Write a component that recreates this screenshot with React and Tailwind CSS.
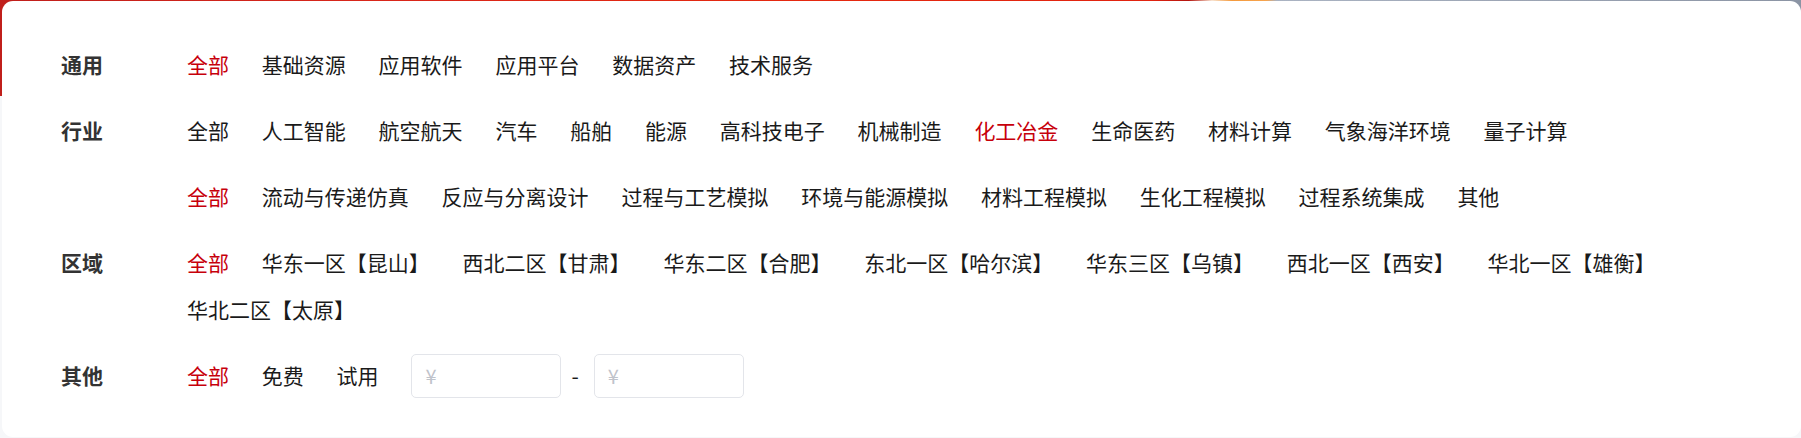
import React from "react";

const rows = [
  { label: "通用", items: ["全部", "基础资源", "应用软件", "应用平台", "数据资产", "技术服务"], active: 0 },
  {
    label: "行业",
    items: ["全部", "人工智能", "航空航天", "汽车", "船舶", "能源", "高科技电子", "机械制造", "化工冶金", "生命医药", "材料计算", "气象海洋环境", "量子计算"],
    active: 8,
  },
  {
    label: "",
    items: ["全部", "流动与传递仿真", "反应与分离设计", "过程与工艺模拟", "环境与能源模拟", "材料工程模拟", "生化工程模拟", "过程系统集成", "其他"],
    active: 0,
  },
  {
    label: "区域",
    items: ["全部", "华东一区【昆山】", "西北二区【甘肃】", "华东二区【合肥】", "东北一区【哈尔滨】", "华东三区【乌镇】", "西北一区【西安】", "华北一区【雄衡】", "华北二区【太原】"],
    active: 0,
  },
];

const font = { fontFamily: '"Noto Sans CJK SC", "Noto Sans", "Liberation Sans", sans-serif' };

function Row({ label, children, className = "" }) {
  return (
    <div className={"flex items-start " + className}>
      <div className="w-[126px] shrink-0 text-[21px] leading-[47px] font-bold text-[#333333]">{label}</div>
      <div className="flex flex-1 flex-wrap items-center gap-x-[32.8px] text-[21px] leading-[47px] text-[#1a1a1a]">
        {children}
      </div>
    </div>
  );
}

export default function App() {
  return (
    <div
      className="h-[438px] w-full bg-[#f6f7f9] bg-[linear-gradient(90deg,#c01f1b_0%,#d8261a_20%,#e5290f_45%,#e1230f_64%,#b3150f_66%,#f8e4d2_67.3%,#f49a3d_68.4%,#f6a44e_70.3%,#aab3c2_70.9%,#8b94a4_100%)] bg-no-repeat bg-[length:100%_96px] pt-[1px] pl-[2px] pb-[1px]"
      style={font}
    >
      <div className="h-full rounded-[11px] bg-white pt-[40px] pl-[59px] pr-[61px]">
        {rows.map((r, i) => (
          <Row key={i} label={r.label} className="mb-[19px]">
            {r.items.map((it, j) => (
              <span key={j} className={"whitespace-nowrap cursor-pointer " + (j === r.active ? "text-[#c7000b]" : "")}>
                {it}
              </span>
            ))}
          </Row>
        ))}
        <Row label="其他" className="mt-[2px]">
          <span className="text-[#c7000b]">全部</span>
          <span>免费</span>
          <span>试用</span>
          <div className="flex items-center">
            <div className="flex h-[44px] w-[150px] items-center rounded-[5px] border border-[#e3e5ea] pl-[13px] text-[20px] text-[#bfc3cb]">
              ¥
            </div>
            <span className="ml-[10px] mr-[15px] text-[21px] text-[#1a1a1a]">-</span>
            <div className="flex h-[44px] w-[150px] items-center rounded-[5px] border border-[#e3e5ea] pl-[13px] text-[20px] text-[#bfc3cb]">
              ¥
            </div>
          </div>
        </Row>
      </div>
    </div>
  );
}
